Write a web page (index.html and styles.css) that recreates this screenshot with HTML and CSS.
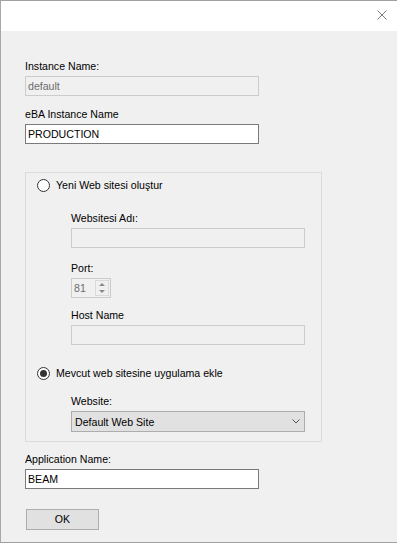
FILE: index.html
```html
<!DOCTYPE html>
<html>
<head>
<meta charset="utf-8">
<link rel="stylesheet" href="styles.css">
</head>
<body>
<div class="window">
  <div class="titlebar">
    <svg class="close" width="10" height="10" viewBox="0 0 10 10"><path d="M0.5 0.5L9.5 9.5M9.5 0.5L0.5 9.5" stroke="#7a7a7a" stroke-width="1" fill="none"/></svg>
  </div>
  <div class="content">
    <div class="field">
      <div class="lbl">Instance Name:</div>
      <div class="box disabled">default</div>
    </div>
    <div class="field f-eba">
      <div class="lbl">eBA Instance Name</div>
      <div class="box">PRODUCTION</div>
    </div>
    <div class="group">
      <div class="radio-row">
        <span class="radio"></span>
        <span>Yeni Web sitesi oluştur</span>
      </div>
      <div class="sub sub-new">
        <div class="field">
          <div class="lbl">Websitesi Adı:</div>
          <div class="box disabled"></div>
        </div>
        <div class="field f-port">
          <div class="lbl">Port:</div>
          <div class="spin">
            <span class="spin-val">81</span>
            <span class="spin-btns">
              <span class="spin-btn"><span class="tri-up"></span></span>
              <span class="spin-btn"><span class="tri-down"></span></span>
            </span>
          </div>
        </div>
        <div class="field f-host">
          <div class="lbl">Host Name</div>
          <div class="box disabled"></div>
        </div>
      </div>
      <div class="radio-row row-existing">
        <span class="radio checked"></span>
        <span>Mevcut web sitesine uygulama ekle</span>
      </div>
      <div class="sub sub-existing">
        <div class="field">
          <div class="lbl">Website:</div>
          <div class="select">
            <span>Default Web Site</span>
            <svg width="8" height="5" viewBox="0 0 8 5"><path d="M0.5 0.5L4 4L7.5 0.5" stroke="#555" stroke-width="1" fill="none"/></svg>
          </div>
        </div>
      </div>
    </div>
    <div class="field f-app">
      <div class="lbl">Application Name:</div>
      <div class="box">BEAM</div>
    </div>
    <div class="btn">OK</div>
  </div>
</div>
</body>
</html>
```
FILE: styles.css
```css
html, body {
  margin: 0;
  padding: 0;
  background: #ffffff;
}
body {
  font-family: "Liberation Sans", Arial, sans-serif;
  font-size: 10.6px;
  color: #000;
}
.window {
  width: 397px;
  height: 543px;
  box-sizing: border-box;
  border-left: 1px solid #a8a8a8;
  border-top: 1px solid #a0a0a0;
  border-bottom: 1px solid #a0a0a0;
  background: #f0f0f0;
  display: flex;
  flex-direction: column;
}
.titlebar {
  height: 30px;
  background: #ffffff;
  display: flex;
  justify-content: flex-end;
  align-items: flex-start;
  padding: 9px 10px 0 0;
  box-sizing: border-box;
}
.content {
  padding: 29px 0 0 24px;
}
.lbl {
  line-height: 13px;
  height: 13px;
  margin-bottom: 3px;
  white-space: nowrap;
}
.box {
  width: 234px;
  height: 20px;
  box-sizing: border-box;
  border: 1px solid #7a7a7a;
  background: #ffffff;
  padding: 0 2px;
  line-height: 18px;
}
.box.disabled {
  border-color: #cccccc;
  background: #f0f0f0;
  color: #6d6d6d;
}
.f-eba { margin-top: 12px; }
.group {
  margin-top: 28px;
  width: 297px;
  box-sizing: border-box;
  border: 1px solid #dcdcdc;
  padding: 6px 0 9px 11px;
}
.radio-row {
  display: flex;
  align-items: center;
  height: 13px;
  gap: 6px;
  line-height: 13px;
}
.radio {
  width: 13px;
  height: 13px;
  box-sizing: border-box;
  border: 1px solid #333333;
  border-radius: 50%;
  background: #ffffff;
  display: flex;
  align-items: center;
  justify-content: center;
}
.radio.checked::after {
  content: "";
  width: 7px;
  height: 7px;
  border-radius: 50%;
  background: #333333;
}
.sub { padding-left: 34px; }
.sub-new { margin-top: 20px; }
.f-port { margin-top: 14px; }
.f-host { margin-top: 11px; }
.row-existing { margin-top: 22px; }
.sub-existing { margin-top: 15px; }
.spin {
  width: 40px;
  height: 20px;
  box-sizing: border-box;
  border: 1px solid #cccccc;
  background: #f0f0f0;
  display: flex;
}
.spin-val {
  flex: 1;
  padding-left: 2px;
  line-height: 18px;
  color: #6d6d6d;
}
.spin-btns {
  width: 14px;
  margin: 1px 1px 1px 0;
  display: flex;
  flex-direction: column;
  border: 1px solid #dadada;
  box-sizing: border-box;
}
.spin-btn {
  flex: 1;
  display: flex;
  align-items: center;
  justify-content: center;
}
.tri-up {
  width: 0;
  height: 0;
  border-left: 3px solid transparent;
  border-right: 3px solid transparent;
  border-bottom: 3px solid #8a8a8a;
}
.tri-down {
  width: 0;
  height: 0;
  border-left: 3px solid transparent;
  border-right: 3px solid transparent;
  border-top: 3px solid #8a8a8a;
}
.select {
  width: 234px;
  height: 21px;
  box-sizing: border-box;
  border: 1px solid #adadad;
  background: #e1e1e1;
  display: flex;
  align-items: center;
  justify-content: space-between;
  padding: 0 4px 0 3px;
}
.f-app { margin-top: 11px; }
.btn {
  margin-top: 20px;
  margin-left: 1px;
  width: 73px;
  height: 21px;
  box-sizing: border-box;
  border: 1px solid #adadad;
  background: #e1e1e1;
  text-align: center;
  line-height: 19px;
}
```
